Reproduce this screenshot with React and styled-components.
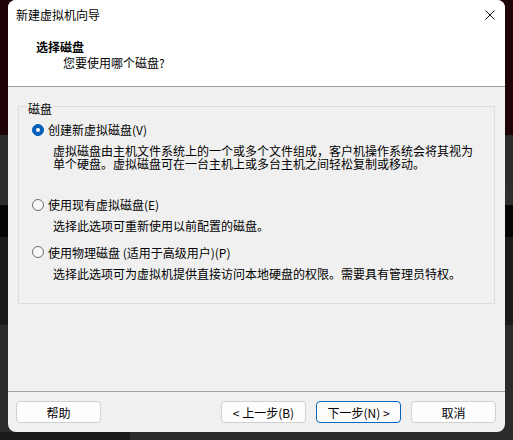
import React from "react";
import styled, { createGlobalStyle } from "styled-components";

const GlobalStyle = createGlobalStyle`
  html, body {
    margin: 0;
    padding: 0;
  }
  body {
    width: 513px;
    height: 440px;
    overflow: hidden;
    font-family: "Noto Sans CJK SC", "Liberation Sans", sans-serif;
    font-size: 12px;
    color: #000;
    background:
      linear-gradient(to right, #1b1b1b 130px, #2b2b2b 130px) left bottom / 100% 8px no-repeat,
      linear-gradient(
        to bottom,
        #1e0408 0px,
        #1e0408 135px,
        #2b2b2b 135px,
        #2e2e2e 205px,
        #050505 205px,
        #050505 237px,
        #1b1b1b 237px,
        #1a1a1a 325px,
        #2b2b2b 325px
      );
  }
`;

const Page = styled.div`
  padding-left: 8px;
  width: 497px;
`;

const Window = styled.div`
  height: 432px;
  background: #f0f0f0;
  border-radius: 8px;
  overflow: hidden;
  display: flex;
  flex-direction: column;
`;

const TitleBar = styled.div`
  height: 30px;
  background: #fff;
  display: flex;
  align-items: center;
  justify-content: space-between;
  padding: 0 10px 0 8px;
`;

const WindowTitle = styled.span`
  font-size: 12px;
  line-height: 16px;
`;

const CloseButton = styled.button`
  width: 10px;
  height: 10px;
  padding: 0;
  border: none;
  background: none;
  display: flex;
  cursor: default;
`;

const Header = styled.div`
  height: 57px;
  box-sizing: border-box;
  background: #fff;
  border-bottom: 1px solid #a0a0a0;
  padding-top: 8px;
`;

const HeaderTitle = styled.div`
  font-weight: 700;
  line-height: 18px;
  padding-left: 28px;
`;

const HeaderSubtitle = styled.div`
  line-height: 14px;
  padding-left: 55px;
`;

const Body = styled.div`
  flex: 1;
  padding: 9px 10px 0 10px;
`;

const GroupBox = styled.fieldset`
  margin: 0;
  border: 1px solid #dcdcdc;
  padding: 0 13px 23px 13px;
`;

const GroupLabel = styled.legend`
  margin-left: -5px;
  padding: 4px 1px 0 1px;
  line-height: 17px;
`;

const Option = styled.div`
  margin-top: ${({ $gap }) => $gap}px;
`;

const RadioRow = styled.label`
  display: flex;
  align-items: center;
  height: 17px;
  gap: 4px;
`;

const RadioCircle = styled.span`
  width: 12px;
  height: 12px;
  box-sizing: border-box;
  border-radius: 50%;
  flex: none;
  display: flex;
  align-items: center;
  justify-content: center;
  background: ${({ $checked }) => ($checked ? "#005fb8" : "#f7f7f7")};
  border: 1px solid ${({ $checked }) => ($checked ? "#005fb8" : "#6e6e6e")};

  &::after {
    content: "";
    width: 4px;
    height: 4px;
    border-radius: 50%;
    background: #fff;
    display: ${({ $checked }) => ($checked ? "block" : "none")};
  }
`;

const Description = styled.p`
  margin: 7px 0 0 21px;
  line-height: 12.5px;
`;

const Footer = styled.div`
  border-top: 1px solid #a0a0a0;
  padding: 9px 9px 9px 8px;
  display: flex;
  gap: 10px;
`;

const Button = styled.button`
  width: 85px;
  height: 22px;
  box-sizing: border-box;
  padding: 0;
  font-family: "Noto Sans CJK SC", "Liberation Sans", sans-serif;
  font-size: 12px;
  color: #000;
  background: #fdfdfd;
  border: 1px solid ${({ $primary }) => ($primary ? "#0067c0" : "#d0d0d0")};
  border-radius: 4px;
  margin-left: ${({ $pushRight }) => ($pushRight ? "auto" : "0")};
`;

const options = [
  {
    label: "创建新虚拟磁盘(V)",
    checked: true,
    gap: 4,
    text: "虚拟磁盘由主机文件系统上的一个或多个文件组成，客户机操作系统会将其视为单个硬盘。虚拟磁盘可在一台主机上或多台主机之间轻松复制或移动。",
  },
  {
    label: "使用现有虚拟磁盘(E)",
    gap: 26,
    text: "选择此选项可重新使用以前配置的磁盘。",
  },
  {
    label: "使用物理磁盘 (适用于高级用户)(P)",
    gap: 11,
    text: "选择此选项可为虚拟机提供直接访问本地硬盘的权限。需要具有管理员特权。",
  },
];

export default function App() {
  return (
    <>
      <GlobalStyle />
      <Page>
        <Window>
          <TitleBar>
            <WindowTitle>新建虚拟机向导</WindowTitle>
            <CloseButton aria-label="关闭">
              <svg width="10" height="10" viewBox="0 0 10 10">
                <path d="M0.5 0.5 L9.5 9.5 M9.5 0.5 L0.5 9.5" stroke="#1a1a1a" strokeWidth="1" />
              </svg>
            </CloseButton>
          </TitleBar>
          <Header>
            <HeaderTitle>选择磁盘</HeaderTitle>
            <HeaderSubtitle>您要使用哪个磁盘?</HeaderSubtitle>
          </Header>
          <Body>
            <GroupBox>
              <GroupLabel>磁盘</GroupLabel>
              {options.map((opt) => (
                <Option key={opt.label} $gap={opt.gap}>
                  <RadioRow>
                    <RadioCircle $checked={opt.checked} />
                    {opt.label}
                  </RadioRow>
                  <Description>{opt.text}</Description>
                </Option>
              ))}
            </GroupBox>
          </Body>
          <Footer>
            <Button>帮助</Button>
            <Button $pushRight>&lt; 上一步(B)</Button>
            <Button $primary>下一步(N) &gt;</Button>
            <Button>取消</Button>
          </Footer>
        </Window>
      </Page>
    </>
  );
}
